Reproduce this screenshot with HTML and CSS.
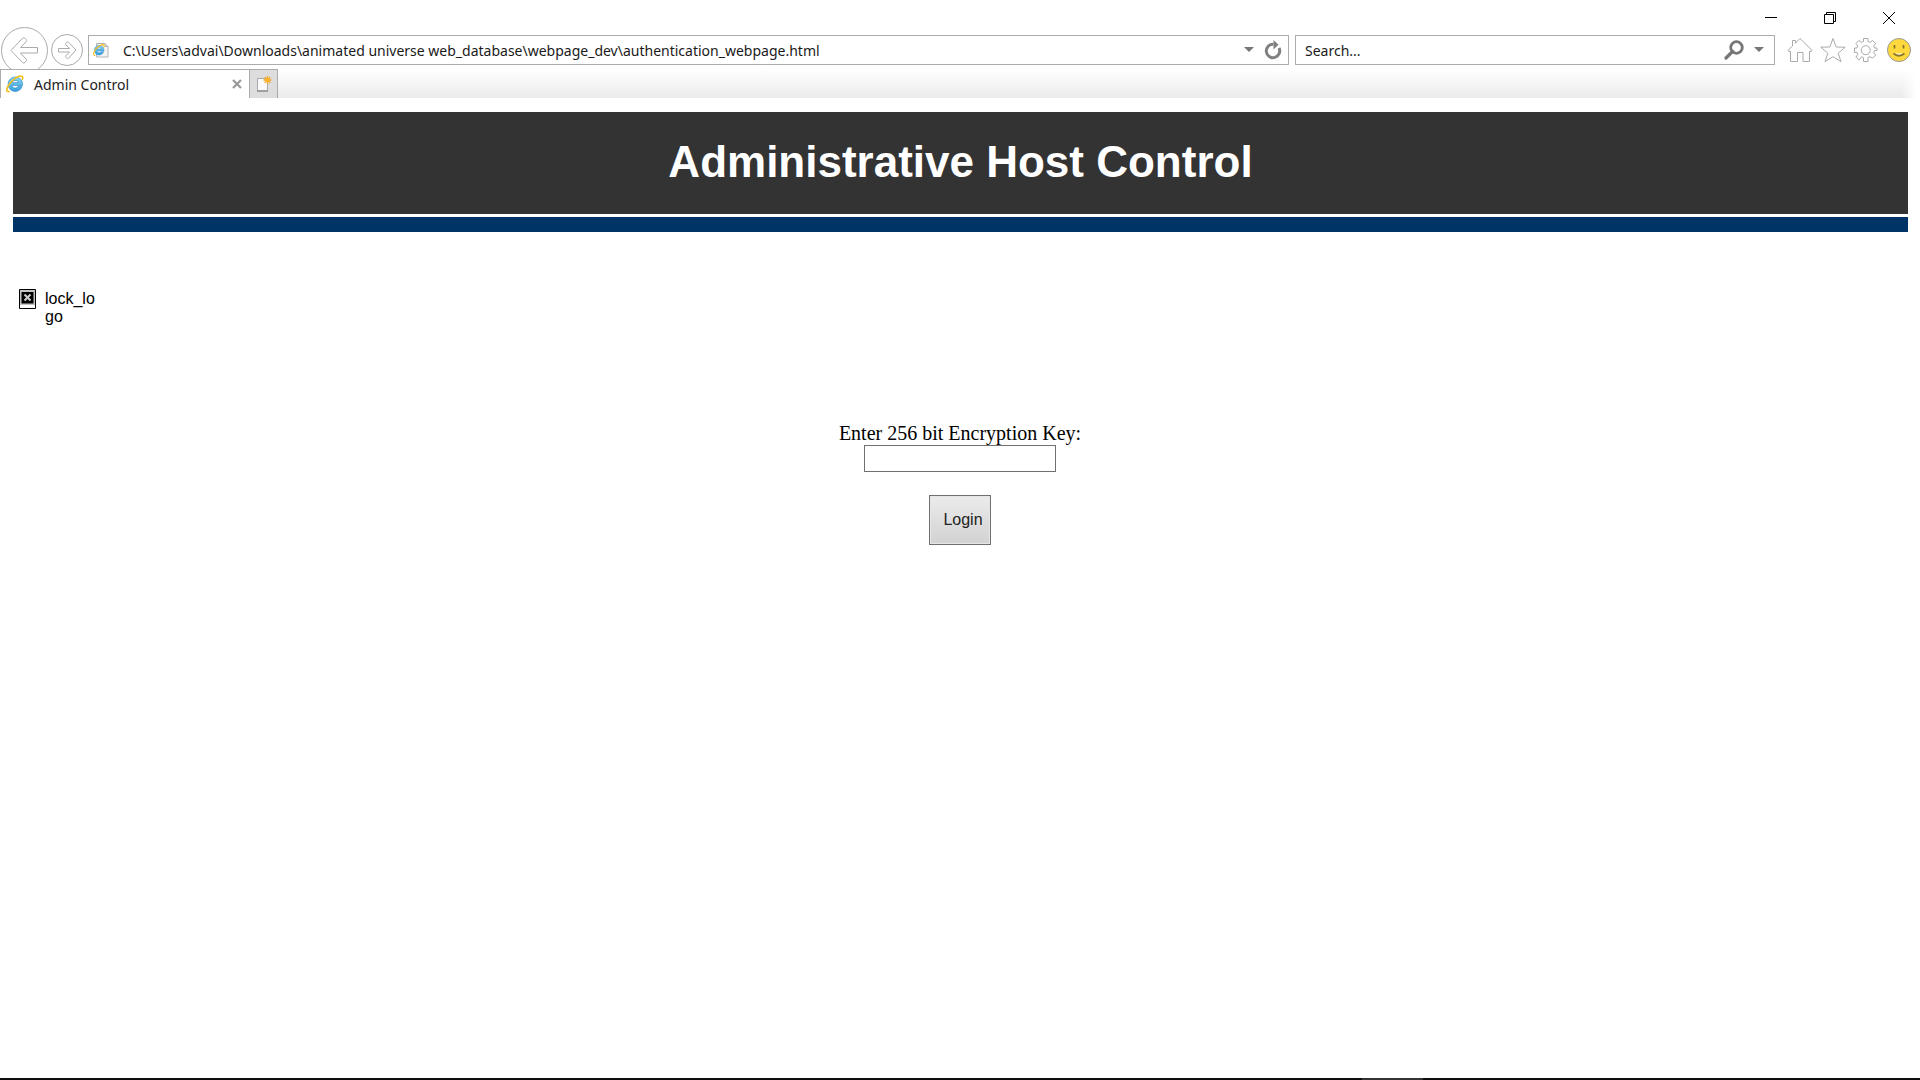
FILE: index.html
```html
<!DOCTYPE html>
<html lang="en">
<head>
<meta charset="utf-8">
<title>Admin Control</title>
<link rel="stylesheet" href="styles.css">
</head>
<body>
<svg class="defs" width="0" height="0" aria-hidden="true">
  <defs>
    <linearGradient id="ie-blue" x1="0" y1="0" x2="0" y2="1">
      <stop offset="0" stop-color="#8ad6f7"/><stop offset="1" stop-color="#35a0de"/>
    </linearGradient>
    <symbol id="ie" viewBox="0 0 16 16">
      <path d="M8.200 1.800C4.700 1.800 1.900 4.600 1.900 8.200s2.800 6.400 6.300 6.400c2.900 0 5.200-1.700 6-4.300h-3.700c-.5.900-1.300 1.300-2.300 1.300-1.500 0-2.600-.9-2.700-2.300h9.200C15 4.900 12.200 1.800 8.200 1.800zM5.600 6.800c.2-1.200 1.200-2 2.600-2s2.500.8 2.600 2z" fill="url(#ie-blue)" stroke="#2b86c2" stroke-width=".6"/>
      <path d="M2.600 14.800C.5 15.200.2 13.200 1.500 10.600 3.300 6.800 7.600 2.600 11.600 1.200c2.700-.9 3.800.4 3 2.600" fill="none" stroke="#f4c01e" stroke-width="1.500" stroke-linecap="round"/>
    </symbol>
  </defs>
</svg>

<header class="browser">
  <div class="titlebar">
    <button class="window-button" aria-label="Minimize"><svg width="12" height="12" viewBox="0 0 12 12"><path d="M0 5.500h12"/></svg></button>
    <button class="window-button" aria-label="Restore"><svg width="12" height="12" viewBox="0 0 12 12"><path d="M.5 2.500h9v9h-9zM2.500 2.500v-2h9v9h-2"/></svg></button>
    <button class="window-button" aria-label="Close"><svg width="12" height="12" viewBox="0 0 12 12"><path d="M0 0l12 12M12 0L0 12"/></svg></button>
  </div>

  <div class="navbar">
    <button class="nav-button back" aria-label="Back"><svg width="48" height="48" viewBox="0 0 48 48"><circle cx="24.500" cy="24.500" r="23"/><path d="M11 24.500L22.500 12.300q1.300-1.300 2.500 0l1 1q1.200 1.200 0 2.500L20.500 21.500H37.500v5.500H20.500l5.500 6q1.200 1.200 0 2.500l-1 1q-1.200 1.200-2.500 0z"/></svg></button>
    <button class="nav-button forward" aria-label="Forward"><svg width="32" height="32" viewBox="0 0 32 32"><circle cx="16" cy="16" r="15.500"/><path d="M25 16l-7.500-7.800q-.8-.8-1.600 0l-1 1q-.7.700 0 1.500l3.600 3.800H7.500v3.500h11l-3.600 3.800q-.7.800 0 1.500l1 1q.8.800 1.600 0z"/></svg></button>

    <div class="field address">
      <svg class="page-icon" width="16" height="16" viewBox="0 0 16 16"><path d="M3.500 1.500h8.500l3 3v10.500h-11.500z" fill="#f5f5f5" stroke="#b4b4b4"/><path d="M12 1.500v3h3" fill="none" stroke="#b4b4b4"/><use href="#ie" x="0" y="2" width="12" height="12"/></svg>
      <input class="field-input" type="text" aria-label="Address" value="C:\Users\advai\Downloads\animated universe web_database\webpage_dev\authentication_webpage.html">
      <button class="icon-button" aria-label="Show history"><svg width="10" height="6" viewBox="0 0 10 6"><path d="M0 0h10L5 5z" fill="#777"/></svg></button>
      <button class="icon-button" aria-label="Refresh"><svg width="18" height="20" viewBox="0 0 18 20"><path d="M9.500 4.300A6.700 6.700 0 1 0 15 8" fill="none" stroke="#808080" stroke-width="3"/><path d="M9.500 0l5 4.700-5 4.800z" fill="#808080"/></svg></button>
    </div>

    <div class="field search">
      <input class="field-input" type="text" aria-label="Search" value="Search...">
      <button class="icon-button" aria-label="Search the web"><svg width="20" height="20" viewBox="0 0 20 20"><circle cx="12.500" cy="7.500" r="5.800" fill="none" stroke="#777" stroke-width="2.800"/><path d="M8.500 11.500L2 18" fill="none" stroke="#777" stroke-width="3.200" stroke-linecap="round"/></svg></button>
      <button class="icon-button" aria-label="Search options"><svg width="10" height="6" viewBox="0 0 10 6"><path d="M0 0h10L5 5z" fill="#777"/></svg></button>
    </div>

    <div class="tools">
      <button class="tool" aria-label="Home"><svg width="26" height="26" viewBox="0 0 26 26"><path d="M.8 13.500L5.500 9V3.500h3v2.700L13 1.500l12.200 12q-1 1.500-2.700.8V24.500h-6.500v-9h-5.500v9H3.500V14.300q-1.700.7-2.700-.8z"/></svg></button>
      <button class="tool" aria-label="Favorites"><svg width="26" height="26" viewBox="0 0 26 26"><path d="M13 1.500l3.200 8.500 9 .2-7 6 2.800 8.500-8-5-8 5 2.800-8.500-7-6 9-.2z"/></svg></button>
      <button class="tool" aria-label="Tools"><svg width="26" height="26" viewBox="0 0 26 26"><path d="M10.500 1.500v3q-1 .3-2 .9l-2.600-1.900-3 3 1.900 2.500-.8 2H1.500v4.500H4l.8 2-1.900 2.600 3 3L8.500 19.700v0q1 .6 2 .9v3.900h4.500v-3.900q1-.3 2-.9l2.600 1.400 3-3-1.900-2.600.8-2h2.500V11h-2.500l-.8-2 1.900-2.500-3-3L17 5.400q-1-.6-2-.9v-3z"/><circle cx="12.700" cy="13.200" r="4.500"/></svg></button>
      <button class="tool" aria-label="Send feedback"><svg width="26" height="26" viewBox="0 0 26 26"><circle cx="13" cy="13" r="11.500" fill="#ffd83d" stroke="#999"/><path d="M8.500 8v3.500M17.500 8v3.500M7.500 16.500q5.500 4.500 11 0" stroke="#8b7426" stroke-width="1.700"/></svg></button>
    </div>
  </div>

  <div class="tabs">
    <div class="tab">
      <svg width="18" height="18"><use href="#ie" width="18" height="18"/></svg>
      <span class="tab-title">Admin Control</span>
      <button class="icon-button" aria-label="Close tab"><svg width="10" height="10" viewBox="0 0 10 10"><path d="M1 1l8 8M9 1L1 9" fill="none" stroke="#999" stroke-width="2.200"/></svg></button>
    </div>
    <button class="new-tab" aria-label="New tab"><svg width="16" height="16" viewBox="0 0 16 16"><path d="M1.500 2.500h10v12.500h-10z" fill="#fafafa" stroke="#aaa"/><path d="M1 15h11" stroke="#777"/><path d="M11.500 0v8M7.500 4h8M8.700 1.200l5.600 5.600M14.300 1.200L8.700 6.800" stroke="#f5a623" stroke-width="1.300"/><circle cx="11.500" cy="4" r="2" fill="#ffb52e"/></svg></button>
  </div>
</header>

<main class="page">
  <h1 class="banner">Administrative Host Control</h1>
  <div class="stripe"></div>

  <div class="logo" role="img" aria-label="lock_logo">
    <svg width="17" height="20" viewBox="0 0 17 20"><path d="M.5.500h16v19H.5z" fill="#fff" stroke="#000"/><path d="M1 1h15v15H1z" fill="#c4c4c4"/><path d="M2.500 3h12v11.500h-12z" fill="#000"/><path d="M5.500 5.500l6 6M11.500 5.500l-6 6" stroke="#ccc" stroke-width="2"/></svg>
    <span class="logo-text">lock_logo</span>
  </div>

  <form class="login">
    <label class="login-label" for="key">Enter 256 bit Encryption Key:</label>
    <input class="login-input" id="key" type="password">
    <button class="login-button" type="button">Login</button>
  </form>
</main>

<footer class="taskbar"><div class="taskbar-item"></div></footer>
</body>
</html>
```
FILE: styles.css
```css
* {
  box-sizing: border-box;
}

body {
  margin: 0;
  min-height: 100vh;
  display: flex;
  flex-direction: column;
  background: #fff;
  color: #000;
  font-family: "Liberation Sans", Arial, sans-serif;
  font-size: 16px;
}

button {
  display: flex;
  align-items: center;
  justify-content: center;
  padding: 0;
  border: 0;
  background: none;
}

svg {
  display: block;
  flex: none;
}

.defs {
  position: absolute;
}

/* Browser chrome */
.browser {
  font-family: "Noto Sans", "Open Sans", sans-serif;
}

.titlebar {
  display: flex;
  justify-content: flex-end;
  height: 35px;
  padding-right: 2px;
}

.window-button {
  width: 59px;
  height: 36px;
}

.window-button svg {
  fill: none;
  stroke: #000;
}

.navbar {
  display: flex;
  align-items: center;
  height: 30px;
}

.nav-button svg,
.tool svg {
  fill: #fff;
  stroke: #aaa;
}

.back {
  width: 48px;
  margin-right: 3px;
}

.forward {
  width: 32px;
  margin-right: 5px;
}

.field {
  display: flex;
  align-items: center;
  gap: 10px;
  height: 30px;
  border: 1px solid #acacac;
  background: #fff;
}

.address {
  flex: 1;
  padding: 0 6px 0 4px;
}

.page-icon {
  margin-right: 4px;
}

.search {
  flex: none;
  width: 25%;
  margin-left: 6px;
  padding: 0 10px 0 9px;
}

.field-input {
  flex: 1;
  min-width: 0;
  padding: 2px 0 0;
  border: 0;
  background: none;
  color: #1a1a1a;
  font: 14px/20px "Noto Sans", "Open Sans", sans-serif;
}

.tools {
  display: flex;
  gap: 7px;
  padding: 0 8px 0 12px;
}

.tabs {
  position: relative;
  display: flex;
  height: 29px;
  margin-top: 4px;
  background:
    linear-gradient(to left, #fff 4px, rgba(255, 255, 255, 0) 18px),
    linear-gradient(#fff, #ebebeb);
}

.tab {
  display: flex;
  align-items: center;
  gap: 10px;
  width: 250px;
  padding: 0 7px 0 5px;
  border: 1px solid #acacac;
  border-bottom: 0;
  background: #fff;
}

.tab-title {
  flex: 1;
  padding-top: 2px;
  color: #222;
  font-size: 14px;
  line-height: 20px;
}

.new-tab {
  width: 28px;
  border: 1px solid #acacac;
  border-width: 1px 1px 0 0;
  background: #ddd;
}

/* Page content */
.page {
  flex: 1;
  padding: 14px 12px 0 13px;
}

.banner {
  margin: 0 0 3px;
  padding: 24px 0 26px;
  background: #333;
  color: #fff;
  font-size: 44px;
  line-height: 52px;
  text-align: center;
}

.stripe {
  height: 15px;
  background: #036;
}

.logo {
  display: flex;
  align-items: flex-start;
  gap: 9px;
  width: 90px;
  margin: 57px 0 0 6px;
}

.logo-text {
  flex: 1;
  max-width: 54px;
  padding-top: 1px;
  line-height: 18px;
  word-break: break-all;
}

.login {
  display: flex;
  flex-direction: column;
  align-items: center;
  margin-top: 96px;
  padding-right: 1px;
}

.login-label {
  font-family: "Liberation Serif", "Times New Roman", serif;
  font-size: 20px;
  line-height: 22px;
  padding-bottom: 1px;
}

.login-input {
  width: 192px;
  height: 27px;
  border: 1px solid #707070;
  background: #fff;
}

.login-button {
  margin-top: 23px;
  padding: 15px 7px 15px 13px;
  border: 1px solid #707070;
  background: linear-gradient(#ebebeb, #d2d2d2);
  box-shadow: inset 0 0 0 1px #e6e6e6;
  color: #222;
  font: 16px/18px "Liberation Sans", Arial, sans-serif;
}

.taskbar {
  display: flex;
  justify-content: flex-end;
  height: 2px;
  padding-right: 497px;
  background: #0e0c0d;
}

.taskbar-item {
  width: 61px;
  background: #333;
}
```
